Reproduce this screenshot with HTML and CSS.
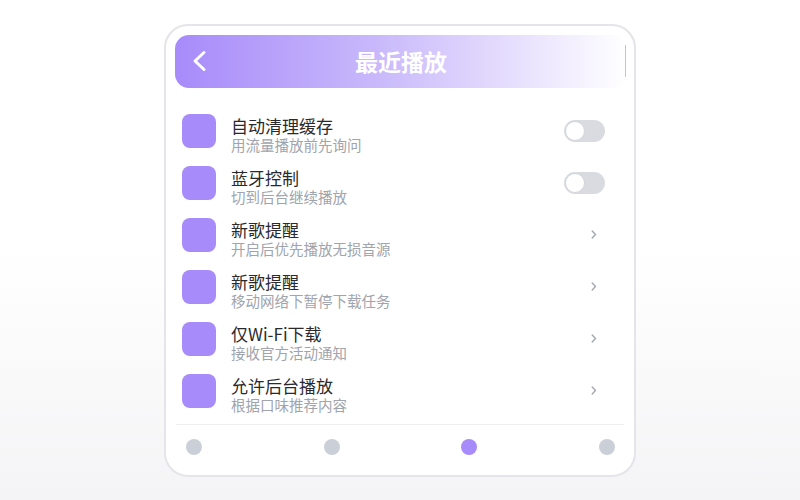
FILE: index.html
```html
<!DOCTYPE html>
<html lang="zh">
<head>
<meta charset="utf-8">
<title>最近播放</title>
<link rel="stylesheet" href="styles.css">
</head>
<body>
<div class="phone">
  <header class="topbar">
    <button class="back" aria-label="返回">
      <svg width="16" height="22" viewBox="0 0 16 22"><polyline points="13,2.5 4,11 13,19.5" fill="none" stroke="#fff" stroke-width="3" stroke-linecap="round" stroke-linejoin="round"/></svg>
    </button>
    <h1 class="title">最近播放</h1>
    <span class="edge"></span>
  </header>

  <ul class="list">
    <li class="row">
      <span class="ico"></span>
      <div class="text"><div class="t">自动清理缓存</div><div class="s">用流量播放前先询问</div></div>
      <span class="toggle"><span class="knob"></span></span>
    </li>
    <li class="row">
      <span class="ico"></span>
      <div class="text"><div class="t">蓝牙控制</div><div class="s">切到后台继续播放</div></div>
      <span class="toggle"><span class="knob"></span></span>
    </li>
    <li class="row">
      <span class="ico"></span>
      <div class="text"><div class="t">新歌提醒</div><div class="s">开启后优先播放无损音源</div></div>
      <svg class="chev" width="6" height="9" viewBox="0 0 6 9"><polyline points="1.2,1 4.5,4.5 1.2,8" fill="none" stroke="#a3a7b0" stroke-width="1.4" stroke-linecap="round" stroke-linejoin="round"/></svg>
    </li>
    <li class="row">
      <span class="ico"></span>
      <div class="text"><div class="t">新歌提醒</div><div class="s">移动网络下暂停下载任务</div></div>
      <svg class="chev" width="6" height="9" viewBox="0 0 6 9"><polyline points="1.2,1 4.5,4.5 1.2,8" fill="none" stroke="#a3a7b0" stroke-width="1.4" stroke-linecap="round" stroke-linejoin="round"/></svg>
    </li>
    <li class="row">
      <span class="ico"></span>
      <div class="text"><div class="t">仅Wi-Fi下载</div><div class="s">接收官方活动通知</div></div>
      <svg class="chev" width="6" height="9" viewBox="0 0 6 9"><polyline points="1.2,1 4.5,4.5 1.2,8" fill="none" stroke="#a3a7b0" stroke-width="1.4" stroke-linecap="round" stroke-linejoin="round"/></svg>
    </li>
    <li class="row">
      <span class="ico"></span>
      <div class="text"><div class="t">允许后台播放</div><div class="s">根据口味推荐内容</div></div>
      <svg class="chev" width="6" height="9" viewBox="0 0 6 9"><polyline points="1.2,1 4.5,4.5 1.2,8" fill="none" stroke="#a3a7b0" stroke-width="1.4" stroke-linecap="round" stroke-linejoin="round"/></svg>
    </li>
  </ul>

  <nav class="dots">
    <span class="dot"></span>
    <span class="dot"></span>
    <span class="dot active"></span>
    <span class="dot"></span>
  </nav>
</div>
</body>
</html>
```

FILE: styles.css
```css
* { box-sizing: border-box; }
html, body { height: 100%; }
body {
  margin: 0;
  font-family: "Noto Sans CJK SC", "Noto Sans", sans-serif;
  background: linear-gradient(to bottom, #ffffff 50%, #f4f4f6 100%);
  display: flex;
  align-items: center;
  justify-content: center;
}
.phone {
  width: 472px;
  height: 453px;
  border: 2px solid #e4e4e9;
  border-radius: 24px;
  background: #fff;
  padding: 9px 7px 20px 9px;
  display: flex;
  flex-direction: column;
}
.topbar {
  height: 53px;
  border-radius: 14px;
  background: linear-gradient(90deg, #a78bfa 0%, #c9b9fb 45%, #ffffff 100%);
  display: grid;
  grid-template-columns: 40px 1fr 40px;
  align-items: center;
  flex: none;
}
.back {
  border: 0;
  background: none;
  padding: 0 0 0 16px;
  margin: 0;
  display: flex;
  align-items: center;
  height: 32px;
}
.title {
  margin: 0;
  text-align: center;
  color: #fff;
  font-size: 23px;
  font-weight: 700;
  line-height: 32px;
}
.edge {
  justify-self: end;
  width: 1px;
  height: 32px;
  background: #c9bbfb;
  margin-right: 1px;
}
.list {
  list-style: none;
  margin: 17px 3px 0 1px;
  padding: 0 0 7px 0;
  border-bottom: 1px solid #eceef2;
}
.row {
  height: 52px;
  display: flex;
  align-items: center;
  padding: 0 19px 0 6px;
}
.ico {
  width: 34px;
  height: 34px;
  border-radius: 8px;
  background: #a78bfa;
  flex: none;
}
.text {
  flex: 1;
  margin-left: 15px;
  padding-top: 8px;
}
.t {
  font-size: 17px;
  line-height: 20px;
  color: #2a2a2e;
}
.s {
  font-size: 14.5px;
  line-height: 18px;
  color: #a0a4ad;
}
.toggle {
  width: 41px;
  height: 22px;
  border-radius: 11px;
  background: #d9dbe1;
  position: relative;
  flex: none;
}
.knob {
  position: absolute;
  left: 1px;
  top: 1px;
  width: 20px;
  height: 20px;
  border-radius: 50%;
  background: #fff;
  border: 1.5px solid #d3d5db;
}
.chev {
  flex: none;
  margin-right: 8px;
}
.dots {
  display: flex;
  justify-content: space-between;
  padding: 14px 12px 0 11px;
}
.dot {
  width: 16px;
  height: 16px;
  border-radius: 50%;
  background: #cbd0d8;
}
.dot.active { background: #a78bfa; }
```
